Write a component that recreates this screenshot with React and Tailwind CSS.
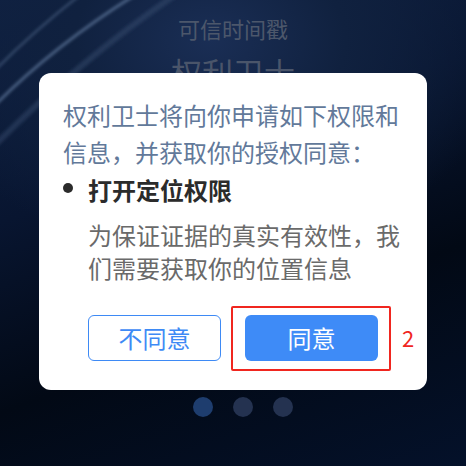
import React from "react";

const font = { fontFamily: '"Noto Sans CJK SC", "Noto Sans", sans-serif' };

const Streaks = () => (
    <svg className="absolute left-0 top-0" width="200" height="200" viewBox="0 0 200 200">
        <defs>
            <filter id="soft">
                <feGaussianBlur stdDeviation="1.6" />
            </filter>
        </defs>
        <path d="M-5 105 Q55 45 135 -5" stroke="#6780a4" strokeOpacity="0.65" strokeWidth="3" fill="none" filter="url(#soft)" />
        <path d="M-5 70 Q35 30 80 -5" stroke="#556d92" strokeOpacity="0.5" strokeWidth="2.5" fill="none" filter="url(#soft)" />
        <path d="M-5 145 Q80 60 175 -5" stroke="#3d5478" strokeOpacity="0.4" strokeWidth="6" fill="none" filter="url(#soft)" />
    </svg>
);

export default function App() {
    return (
        <div
            className="relative w-[466px] h-[466px] overflow-hidden bg-[#020915] bg-[radial-gradient(ellipse_300px_220px_at_210px_40px,#1a2e55_0%,#10213f_45%,transparent_100%),linear-gradient(160deg,#0f2143_0%,#081530_35%,#020915_65%,#04112a_100%)]"
            style={font}
        >
            <Streaks />

            {/* underlying page */}
            <div className="relative flex flex-col items-center h-full pb-[49px]">
                <div className="mt-[14px] text-[22px] leading-[28px] text-[#4c576b]">可信时间戳</div>
                <div className="mt-[10px] text-[31px] leading-[40px] text-[#4a556a]">权利卫士</div>
                <div className="flex-1" />
                <div className="flex gap-5 ml-5">
                    <span className="w-5 h-5 rounded-full bg-[#1e3d6e]" />
                    <span className="w-5 h-5 rounded-full bg-[#243250]" />
                    <span className="w-5 h-5 rounded-full bg-[#243250]" />
                </div>
            </div>

            {/* permission dialog */}
            <div className="absolute left-[39px] top-[73px] w-[388px] bg-white rounded-xl pl-6 pr-5 pt-[23px] pb-[29px]">
                <p className="text-[24px] leading-[37px] text-[#62799a]">
                    权利卫士将向你申请如下权限和信息，并获取你的授权同意：
                </p>
                <div className="mt-px flex items-center">
                    <span className="w-[10px] h-[10px] rounded-full bg-[#2b2b2b] mr-[15px] -mt-[4px]" />
                    <span className="text-[24px] leading-[37px] font-bold text-[#2b2b2b]">打开定位权限</span>
                </div>
                <p className="mt-[10px] pl-[25px] text-[24px] leading-[33px] text-[#6a6a6a]">
                    为保证证据的真实有效性，我们需要获取你的位置信息
                </p>
                <div className="mt-[31px] flex justify-center gap-6 -ml-6 -mr-5">
                    <button className="w-[133px] h-[46px] rounded-md border border-[#3e8af5] text-[#3e8af5] text-[24px] leading-none">
                        不同意
                    </button>
                    <div className="relative">
                        <button className="w-[133px] h-[46px] rounded-md bg-[#3e8bf7] text-white text-[24px] leading-none">
                            同意
                        </button>
                        <div className="absolute -left-[14px] -right-[13px] -top-[9px] -bottom-[10px] border-2 border-[#f0261f] rounded-[2px]" />
                        <span className="absolute left-[157px] top-[8px] text-[22px] leading-[28px] text-[#f0261f]">2</span>
                    </div>
                </div>
            </div>
        </div>
    );
}
